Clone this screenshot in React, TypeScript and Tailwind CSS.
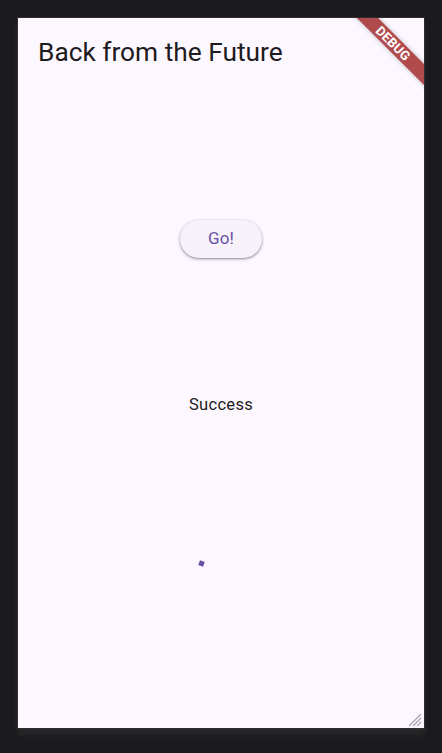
import React from "react";

export default function App() {
  return (
    <div className="w-[442px] h-[753px] bg-[#1b1b1d] pt-[17px] pl-[17px]" style={{ fontFamily: "Roboto, 'Noto Sans', sans-serif" }}>
      <div className="w-[408px] border border-[#2e2e31] shadow-[0_6px_6px_rgba(255,255,255,0.06)]">
        <div className="relative w-[406px] h-[710px] bg-[#fdf7ff] overflow-hidden flex flex-col">
          <div className="h-[78px] pl-[20px] pt-[17px] flex items-start">
            <span className="text-[26.3px] leading-[34px] text-[#1d1b20]">Back from the Future</span>
          </div>
          <div className="flex flex-col items-center">
            <button className="mt-[124px] w-[82px] h-[38px] rounded-full bg-[#f7f2fa] shadow-[0_1px_2px_rgba(0,0,0,0.3),0_1px_3px_1px_rgba(0,0,0,0.12)] text-[#6750a4] text-[17px] tracking-[0.1px] flex items-center justify-center">
              Go!
            </button>
            <div className="mt-[137px] text-[16.5px] leading-[20px] tracking-[0.3px] text-[#1d1b20]">Success</div>
            <div className="mt-[146px] ml-[-40px] w-[5px] h-[5px] bg-[#6750a4] rotate-[20deg]"></div>
          </div>
          <div className="absolute top-[18px] right-[-31px] w-[124px] h-[15px] bg-[#b14a4c] rotate-45 shadow-[0_0_5px_rgba(0,0,0,0.25)] flex items-center justify-center">
            <span className="text-white text-[13px] font-bold tracking-[0.2px] leading-none">DEBUG</span>
          </div>
          <svg className="absolute right-[2px] bottom-[1px]" width="16" height="16" viewBox="0 0 16 16">
            <path d="M15 3 L3 15 M15 7 L7 15 M15 11 L11 15" stroke="#a8a5ab" strokeWidth="1.3" fill="none" />
          </svg>
        </div>
      </div>
    </div>
  );
}
